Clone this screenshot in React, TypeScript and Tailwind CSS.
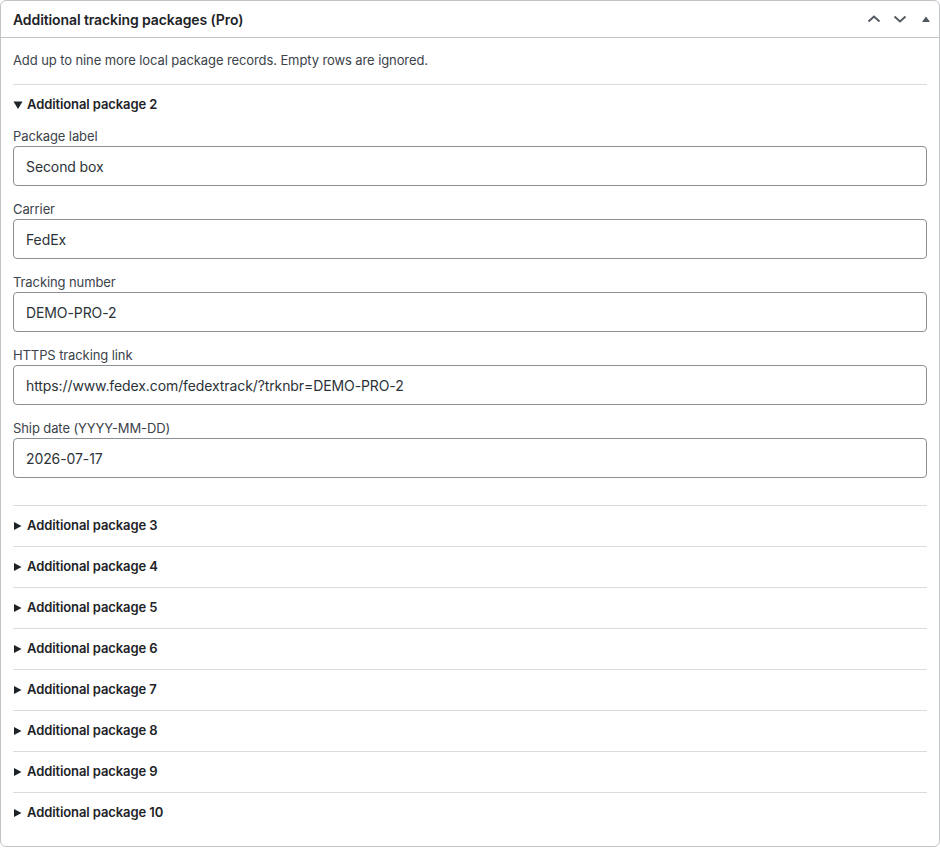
import { useState } from "react";

const fields = [
  { label: "Package label", value: "Second box" },
  { label: "Carrier", value: "FedEx" },
  { label: "Tracking number", value: "DEMO-PRO-2" },
  { label: "HTTPS tracking link", value: "https://www.fedex.com/fedextrack/?trknbr=DEMO-PRO-2" },
  { label: "Ship date (YYYY-MM-DD)", value: "2026-07-17" },
];

function Caret({ open }: { open: boolean }) {
  return (
    <svg width="10" height="10" viewBox="0 0 10 10" className="shrink-0 mr-[4px]">
      {open ? <path d="M0.5 1.5h9L5 9z" fill="#1d2327" /> : <path d="M1 1v8L8.5 5z" fill="#1d2327" />}
    </svg>
  );
}

function App() {
  // eslint-disable-next-line @typescript-eslint/no-unused-vars
  const [values, setValues] = useState(fields);
  return (
    <div className="bg-white min-h-[848px] font-['Inter',sans-serif]">
      <div className="w-[940px] h-[847px] border border-[#c3c4c7] rounded-[6px] bg-white">
        <div className="h-[37px] border-b border-[#c3c4c7] flex items-center justify-between pl-[12px] pr-[8px]">
          <h2 className="text-[14px] font-semibold text-[#1d2327] tracking-[-0.1px]">
            Additional tracking packages (Pro)
          </h2>
          <div className="flex items-center gap-[12px] text-[#50575e]">
            <svg width="14" height="14" viewBox="0 0 14 14" fill="none" stroke="currentColor" strokeWidth="1.8">
              <path d="M1.5 9.5l5.5-5 5.5 5" />
            </svg>
            <svg width="14" height="14" viewBox="0 0 14 14" fill="none" stroke="currentColor" strokeWidth="1.8">
              <path d="M1.5 4.5l5.5 5 5.5-5" />
            </svg>
            <svg width="10" height="10" viewBox="0 0 10 10" className="ml-[2px]">
              <path d="M1 8h8L5 2.5z" fill="currentColor" />
            </svg>
          </div>
        </div>
        <div className="px-[12px] pt-[12px]">
          <p className="text-[13px] leading-[20px] text-[#3c434a] pb-[14px] tracking-[-0.1px]">
            Add up to nine more local package records. Empty rows are ignored.
          </p>
          <div className="border-t border-[#dcdcde] pb-[27px]">
            <div className="flex items-center h-[40px] text-[13px] font-semibold text-[#1d2327] tracking-[-0.1px]">
              <Caret open />
              Additional package 2
            </div>
            <div className="flex flex-col gap-[15px] pt-[3px]">
              {values.map((f) => (
                <div key={f.label} className="flex flex-col">
                  <label className="text-[13px] leading-[16px] text-[#3c434a] mb-[2px] tracking-[-0.1px]">{f.label}</label>
                  <input
                    readOnly
                    value={f.value}
                    className="h-[40px] w-full border border-[#8c8f94] rounded-[4px] px-[12px] text-[14px] text-[#2c3338] outline-none tracking-[-0.1px]"
                  />
                </div>
              ))}
            </div>
          </div>
          {[3, 4, 5, 6, 7, 8, 9, 10].map((n) => (
            <div
              key={n}
              className="border-t border-[#dcdcde] flex items-center h-[41px] text-[13px] font-semibold text-[#1d2327] tracking-[-0.1px]"
            >
              <Caret open={false} />
              Additional package {n}
            </div>
          ))}
        </div>
      </div>
    </div>
  );
}

export default App;
